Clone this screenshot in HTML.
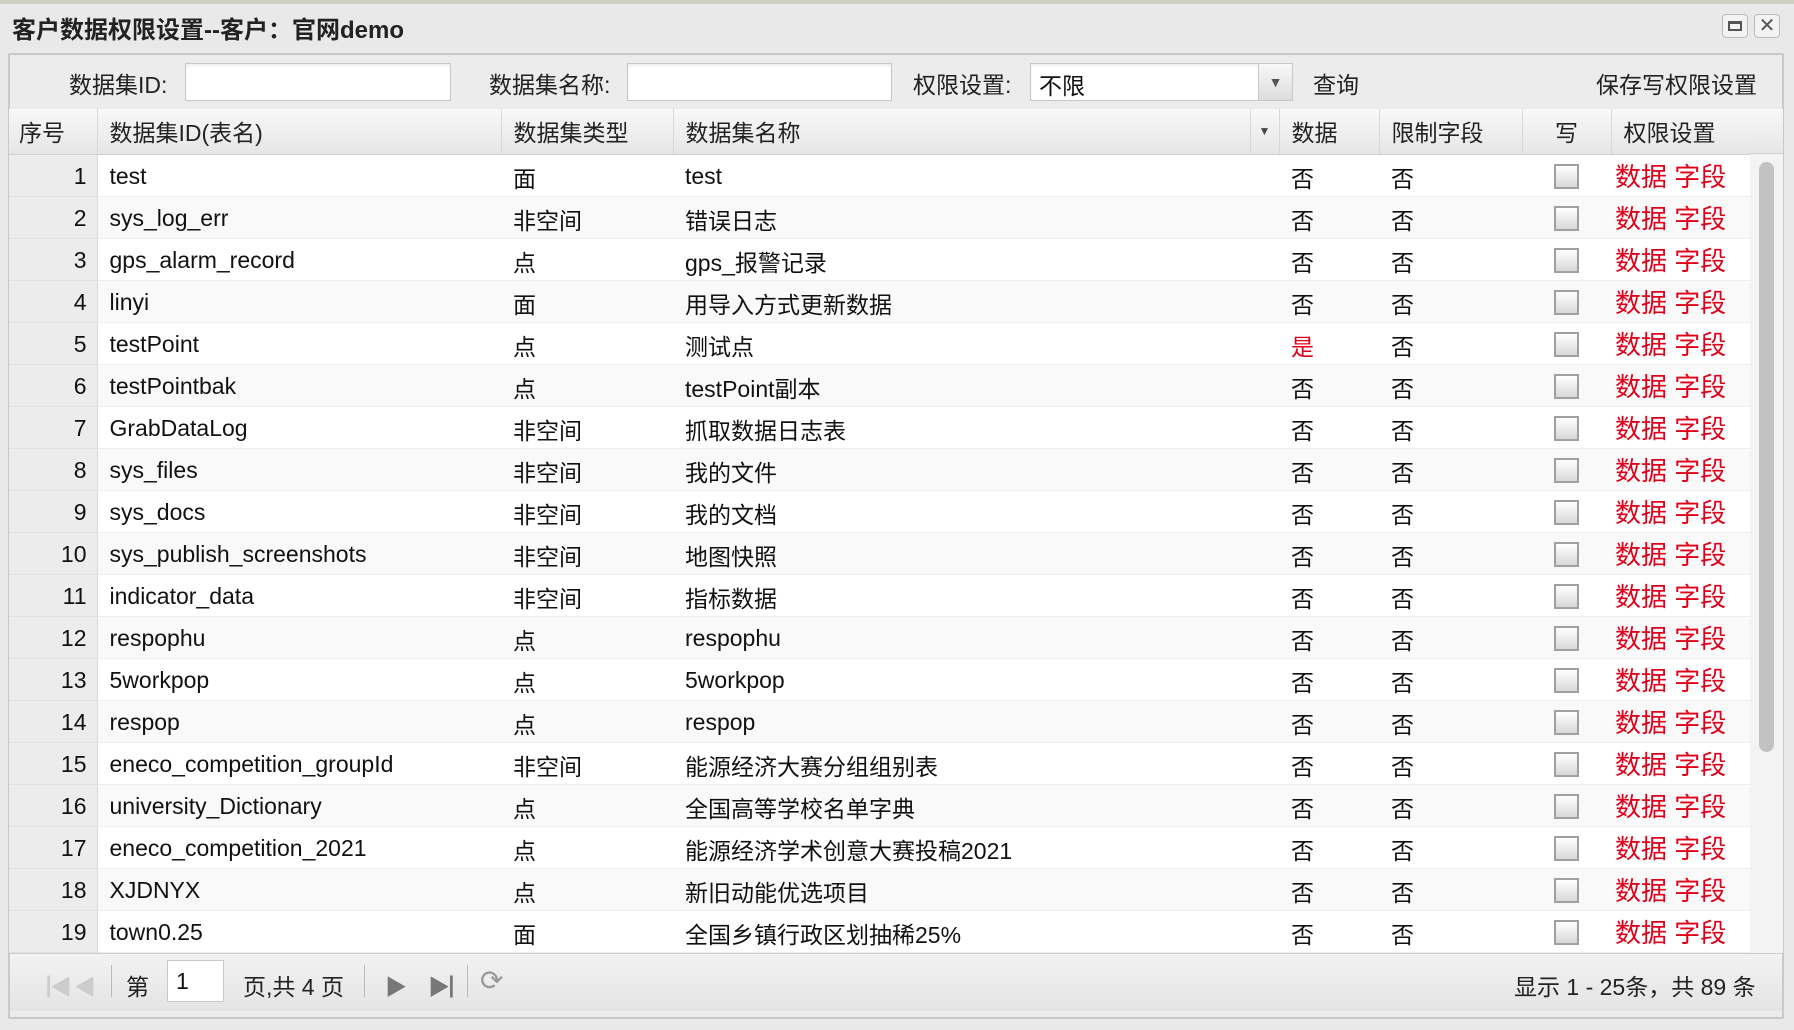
<!DOCTYPE html>
<html><head><meta charset="utf-8"><style>
*{box-sizing:border-box;margin:0;padding:0}
body{width:1794px;height:1030px;background:#e9e9e9;font-family:"Liberation Sans","Noto Sans CJK SC",sans-serif;color:#111;position:relative;overflow:hidden}
.abs{position:absolute}
#title{left:12px;top:10px;font-size:24px;font-weight:bold;color:#222}
#panel{left:8px;top:53px;width:1776px;height:966px;border:2px solid #c9c9c9;background:#ececec;border-radius:2px}
.lbl{font-size:23px;top:66px;color:#222}
.inp{top:63px;height:38px;background:#fff;border:1px solid #c8c8c8;box-shadow:inset 0 2px 2px #eee}
table{position:absolute;left:9px;top:109px;border-collapse:collapse;table-layout:fixed;font-size:23px}
th{height:45px;background:linear-gradient(#f8f8f8,#e6e6e6);border-right:1px solid #d8d8d8;border-bottom:1px solid #cfcfcf;font-weight:normal;text-align:left;padding-left:12px;color:#222}
td{height:42px;padding-left:12px;padding-top:3px;border-bottom:1px solid #eee;white-space:nowrap;overflow:hidden}
td.n{background:#ececec;text-align:right;padding-right:10px;padding-left:0;border-right:1px solid #d8d8d8;border-bottom:1px solid #e2e2e2}
tr:nth-child(even) td:not(.n){background:#fff}
tr:nth-child(odd) td:not(.n){background:#f9f9f9}
.r{color:#e0001a}
td.p{font-size:26px;padding-left:4px;padding-top:0;color:#e0001a}
.cb{display:inline-block;width:25px;height:25px;border:2px solid #a0a0a0;background:linear-gradient(#fff,#d8d8d8);vertical-align:middle}
#pager{left:10px;top:953px;width:1772px;height:58px;background:linear-gradient(#f2f2f2,#e4e4e4);border-top:1px solid #ccc}
.pt{font-size:23px;top:15px;color:#222}
.sep{top:12px;width:1px;height:32px;background:#bbb}
</style></head><body>
<div class="abs" style="left:0;top:0;width:1794px;height:4px;background:#cfcfc0"></div>
<div id="title" class="abs">客户数据权限设置--客户：官网demo</div>
<div class="abs" style="left:1722px;top:14px;width:26px;height:24px;border:1px solid #bbb;border-radius:4px;background:#f3f3f3"><div style="margin:6px 5px;width:14px;height:10px;border:2px solid #555;border-top-width:3px"></div></div>
<div class="abs" style="left:1754px;top:14px;width:26px;height:24px;border:1px solid #bbb;border-radius:4px;background:#f3f3f3;font-size:20px;text-align:center;line-height:22px;color:#555">✕</div>
<div id="panel" class="abs"></div>
<div class="abs lbl" style="left:69px">数据集ID:</div>
<div class="abs inp" style="left:185px;width:266px"></div>
<div class="abs lbl" style="left:489px">数据集名称:</div>
<div class="abs inp" style="left:627px;width:265px"></div>
<div class="abs lbl" style="left:913px">权限设置:</div>
<div class="abs inp" style="left:1030px;width:263px;padding:3px 8px;font-size:23px">不限</div>
<div class="abs" style="left:1258px;top:63px;width:35px;height:38px;border:1px solid #c8c8c8;background:linear-gradient(#f8f8f8,#ddd);font-size:14px;text-align:center;line-height:36px;color:#555">▼</div>
<div class="abs lbl" style="left:1313px">查询</div>
<div class="abs lbl" style="left:1596px">保存写权限设置</div>
<table>
<colgroup><col style="width:88px"><col style="width:404px"><col style="width:172px"><col style="width:606px"><col style="width:100px"><col style="width:143px"><col style="width:89px"><col style="width:139px"></colgroup>
<tr><th style="padding-left:10px">序号</th><th>数据集ID(表名)</th><th>数据集类型</th><th style="position:relative">数据集名称<span style="position:absolute;right:0;top:0;width:29px;height:44px;border-left:1px solid #d8d8d8;font-size:12px;text-align:center;line-height:44px;color:#444">▼</span></th><th>数据</th><th>限制字段</th><th style="text-align:center;padding:0">写</th><th>权限设置</th></tr>
<tr><td class="n">1</td><td>test</td><td>面</td><td>test</td><td>否</td><td>否</td><td style="text-align:center;padding:0"><span class="cb"></span></td><td class="p">数据 字段</td></tr>
<tr><td class="n">2</td><td>sys_log_err</td><td>非空间</td><td>错误日志</td><td>否</td><td>否</td><td style="text-align:center;padding:0"><span class="cb"></span></td><td class="p">数据 字段</td></tr>
<tr><td class="n">3</td><td>gps_alarm_record</td><td>点</td><td>gps_报警记录</td><td>否</td><td>否</td><td style="text-align:center;padding:0"><span class="cb"></span></td><td class="p">数据 字段</td></tr>
<tr><td class="n">4</td><td>linyi</td><td>面</td><td>用导入方式更新数据</td><td>否</td><td>否</td><td style="text-align:center;padding:0"><span class="cb"></span></td><td class="p">数据 字段</td></tr>
<tr><td class="n">5</td><td>testPoint</td><td>点</td><td>测试点</td><td class="r">是</td><td>否</td><td style="text-align:center;padding:0"><span class="cb"></span></td><td class="p">数据 字段</td></tr>
<tr><td class="n">6</td><td>testPointbak</td><td>点</td><td>testPoint副本</td><td>否</td><td>否</td><td style="text-align:center;padding:0"><span class="cb"></span></td><td class="p">数据 字段</td></tr>
<tr><td class="n">7</td><td>GrabDataLog</td><td>非空间</td><td>抓取数据日志表</td><td>否</td><td>否</td><td style="text-align:center;padding:0"><span class="cb"></span></td><td class="p">数据 字段</td></tr>
<tr><td class="n">8</td><td>sys_files</td><td>非空间</td><td>我的文件</td><td>否</td><td>否</td><td style="text-align:center;padding:0"><span class="cb"></span></td><td class="p">数据 字段</td></tr>
<tr><td class="n">9</td><td>sys_docs</td><td>非空间</td><td>我的文档</td><td>否</td><td>否</td><td style="text-align:center;padding:0"><span class="cb"></span></td><td class="p">数据 字段</td></tr>
<tr><td class="n">10</td><td>sys_publish_screenshots</td><td>非空间</td><td>地图快照</td><td>否</td><td>否</td><td style="text-align:center;padding:0"><span class="cb"></span></td><td class="p">数据 字段</td></tr>
<tr><td class="n">11</td><td>indicator_data</td><td>非空间</td><td>指标数据</td><td>否</td><td>否</td><td style="text-align:center;padding:0"><span class="cb"></span></td><td class="p">数据 字段</td></tr>
<tr><td class="n">12</td><td>respophu</td><td>点</td><td>respophu</td><td>否</td><td>否</td><td style="text-align:center;padding:0"><span class="cb"></span></td><td class="p">数据 字段</td></tr>
<tr><td class="n">13</td><td>5workpop</td><td>点</td><td>5workpop</td><td>否</td><td>否</td><td style="text-align:center;padding:0"><span class="cb"></span></td><td class="p">数据 字段</td></tr>
<tr><td class="n">14</td><td>respop</td><td>点</td><td>respop</td><td>否</td><td>否</td><td style="text-align:center;padding:0"><span class="cb"></span></td><td class="p">数据 字段</td></tr>
<tr><td class="n">15</td><td>eneco_competition_groupId</td><td>非空间</td><td>能源经济大赛分组组别表</td><td>否</td><td>否</td><td style="text-align:center;padding:0"><span class="cb"></span></td><td class="p">数据 字段</td></tr>
<tr><td class="n">16</td><td>university_Dictionary</td><td>点</td><td>全国高等学校名单字典</td><td>否</td><td>否</td><td style="text-align:center;padding:0"><span class="cb"></span></td><td class="p">数据 字段</td></tr>
<tr><td class="n">17</td><td>eneco_competition_2021</td><td>点</td><td>能源经济学术创意大赛投稿2021</td><td>否</td><td>否</td><td style="text-align:center;padding:0"><span class="cb"></span></td><td class="p">数据 字段</td></tr>
<tr><td class="n">18</td><td>XJDNYX</td><td>点</td><td>新旧动能优选项目</td><td>否</td><td>否</td><td style="text-align:center;padding:0"><span class="cb"></span></td><td class="p">数据 字段</td></tr>
<tr><td class="n">19</td><td>town0.25</td><td>面</td><td>全国乡镇行政区划抽稀25%</td><td>否</td><td>否</td><td style="text-align:center;padding:0"><span class="cb"></span></td><td class="p">数据 字段</td></tr>
</table>
<div class="abs" style="left:1750px;top:109px;width:33px;height:45px;background:linear-gradient(#f8f8f8,#e6e6e6);border-bottom:1px solid #cfcfcf"></div>
<div class="abs" style="left:1750px;top:154px;width:33px;height:799px;background:#f3f3f3"></div>
<div class="abs" style="left:1759px;top:162px;width:15px;height:590px;background:#c2c2c2;border-radius:8px"></div>
<div id="pager" class="abs"></div>
<div class="abs" style="left:28px;top:970px;font-size:22px;color:#ccc">▕◀</div>
<div class="abs" style="left:74px;top:970px;font-size:22px;color:#ccc">◀</div>
<div class="abs sep" style="left:111px;top:965px"></div>
<div class="abs pt" style="left:126px;top:968px">第</div>
<div class="abs" style="left:167px;top:960px;width:57px;height:42px;background:#fff;border:1px solid #c8c8c8;font-size:23px;padding:7px 8px">1</div>
<div class="abs pt" style="left:243px;top:968px">页,共 4 页</div>
<div class="abs sep" style="left:364px;top:965px"></div>
<div class="abs" style="left:385px;top:970px;font-size:22px;color:#777">▶</div>
<div class="abs" style="left:428px;top:970px;font-size:22px;color:#777">▶▏</div>
<div class="abs sep" style="left:467px;top:965px"></div>
<div class="abs" style="left:480px;top:964px;font-size:28px;color:#999">⟳</div>
<div class="abs pt" style="left:1514px;top:968px">显示 1 - 25条，共 89 条</div>
</body></html>
